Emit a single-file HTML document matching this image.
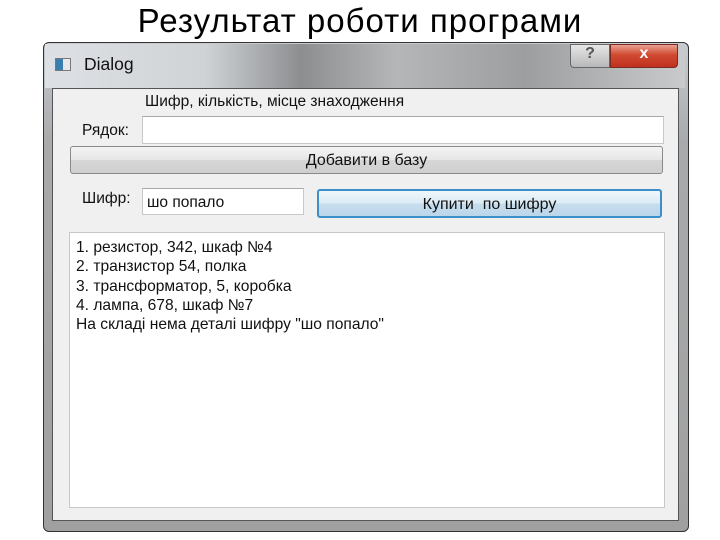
<!DOCTYPE html>
<html><head><meta charset="utf-8"><style>
*{margin:0;padding:0;box-sizing:border-box}
body{width:720px;height:540px;background:#fff;position:relative;overflow:hidden;font-family:"Liberation Sans","DejaVu Sans",sans-serif}
.abs{position:absolute}
.title{left:0;width:720px;top:4px;text-align:center;font-size:33px;line-height:1;color:#000;letter-spacing:1px}
.win{left:43px;top:42px;width:646px;height:490px;border:1px solid #333;border-radius:6px;background:linear-gradient(#c8ccd0,#a8aaac 20%,#a0a0a0);}
.tb{left:45px;top:44px;width:640px;height:44px;background:linear-gradient(90deg,#dde0e4 0%,#d0d3d6 25%,#8c8e90 40%,#b4b6b8 55%,#9c9ea0 75%,#c8cacc 100%);}
.client{left:52px;top:88px;width:627px;height:433px;background:#f0f0f0;border:1px solid #555;}
.t{font-size:15.5px;color:#111;white-space:nowrap}
.inp{background:#fff;border:1px solid #c8c8c8;border-top-color:#aaa}
.btn{border:1px solid #8a8a8a;border-radius:3px;background:linear-gradient(#f4f4f4,#e6e6e6 50%,#d6d6d6 51%,#cfcfcf);text-align:center;font-size:16px;color:#111}
</style></head><body>
<div class="abs title">Результат роботи програми</div>
<div class="abs win"></div>
<div class="abs tb"></div>
<div class="abs" style="left:55px;top:58px;width:16px;height:13px;background:linear-gradient(90deg,#3a7fb0 50%,#e8e8e8 50%);border:1px solid #777"></div>
<div class="abs t" style="left:84px;top:54px;font-size:17.5px">Dialog</div>
<div class="abs" style="left:570px;top:44px;width:40px;height:24px;border:1px solid #666;border-radius:0 0 0 4px;background:linear-gradient(#e6e6e6,#b8b8b8);text-align:center;font-size:16px;font-weight:bold;color:#555">?</div>
<div class="abs" style="left:610px;top:44px;width:68px;height:24px;border:1px solid #7a2a20;border-radius:0 0 4px 0;background:linear-gradient(#e8a090,#d04a30 45%,#c03020);text-align:center;font-size:16px;font-weight:bold;color:#fff">x</div>
<div class="abs client"></div>
<div class="abs t" style="left:145px;top:93px">Шифр, кількість, місце знаходження</div>
<div class="abs t" style="left:82px;top:122px">Рядок:</div>
<div class="abs inp" style="left:142px;top:116px;width:522px;height:28px"></div>
<div class="abs btn" style="left:70px;top:146px;width:593px;height:28px;line-height:27px">Добавити в базу</div>
<div class="abs t" style="left:82px;top:190px">Шифр:</div>
<div class="abs inp" style="left:142px;top:188px;width:162px;height:27px"><span class="t" style="position:absolute;left:4px;top:5px">шо попало</span></div>
<div class="abs btn" style="left:317px;top:189px;width:345px;height:29px;line-height:27px;border:2px solid #3c8fc8;background:linear-gradient(#eef6fb,#dcebf5 50%,#c6dded 51%,#bcd6ea)">Купити&nbsp; по шифру</div>
<div class="abs inp" style="left:69px;top:232px;width:596px;height:276px;border-color:#c8c8c8"></div>
<div class="abs t" style="left:76px;top:238px;line-height:19.3px;font-size:15.6px">1. резистор, 342, шкаф №4<br>2. транзистор 54, полка<br>3. трансформатор, 5, коробка<br>4. лампа, 678, шкаф №7<br>На складі нема деталі шифру "шо попало"</div>
</body></html>
